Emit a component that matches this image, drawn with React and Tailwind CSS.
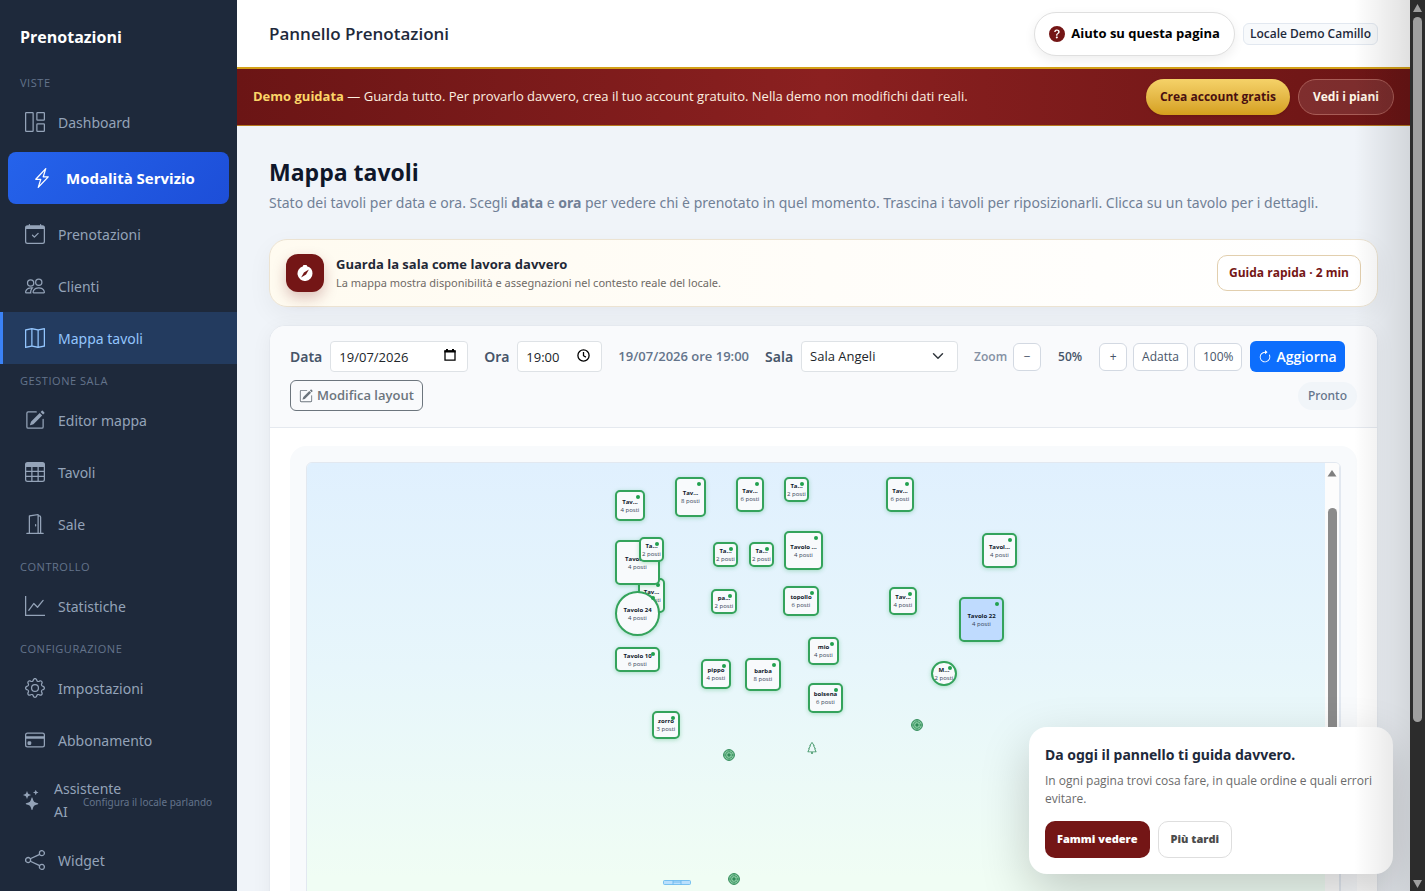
import { useState } from "react";
import clsx from "clsx";
import {
  BsArrowClockwise,
  BsCalendarCheck,
  BsCompassFill,
  BsCreditCard,
  BsDoorOpen,
  BsGear,
  BsGraphUp,
  BsGrid1X2,
  BsLightningCharge,
  BsMap,
  BsPencilSquare,
  BsPeople,
  BsQuestionCircleFill,
  BsShare,
  BsStars,
  BsTable,
  BsTree,
} from "react-icons/bs";

const sections = [
  {
    title: "Viste",
    items: [
      { label: "Dashboard", icon: BsGrid1X2 },
      { label: "Modalità Servizio", icon: BsLightningCharge, variant: "service" },
      { label: "Prenotazioni", icon: BsCalendarCheck },
      { label: "Clienti", icon: BsPeople },
      { label: "Mappa tavoli", icon: BsMap, active: true },
    ],
  },
  {
    title: "Gestione sala",
    items: [
      { label: "Editor mappa", icon: BsPencilSquare },
      { label: "Tavoli", icon: BsTable },
      { label: "Sale", icon: BsDoorOpen },
    ],
  },
  { title: "Controllo", items: [{ label: "Statistiche", icon: BsGraphUp }] },
  {
    title: "Configurazione",
    items: [
      { label: "Impostazioni", icon: BsGear },
      { label: "Abbonamento", icon: BsCreditCard },
      { label: "Assistente AI", icon: BsStars, hint: "Configura il locale parlando" },
      { label: "Widget", icon: BsShare },
    ],
  },
];

// x / y / w / h are canvas coordinates at 50% zoom
const tables = [
  { name: "Tav...", seats: 4, x: 308, y: 27, w: 30, h: 31 },
  { name: "Tav...", seats: 8, x: 368, y: 14, w: 31, h: 40 },
  { name: "Tav...", seats: 6, x: 429, y: 14, w: 28, h: 35 },
  { name: "Ta...", seats: 2, x: 477, y: 14, w: 25, h: 25 },
  { name: "Tav...", seats: 6, x: 579, y: 14, w: 28, h: 35 },
  { name: "Tavolo 2", seats: 4, x: 308, y: 77, w: 45, h: 45, front: true },
  { name: "Ta...", seats: 2, x: 332, y: 74, w: 25, h: 25, front: true },
  { name: "Tav...", seats: 6, x: 331, y: 115, w: 27, h: 35 },
  { name: "Tavolo 24", seats: 4, x: 308, y: 128, w: 45, h: 45, round: true },
  { name: "Ta...", seats: 2, x: 406, y: 79, w: 25, h: 25 },
  { name: "Ta...", seats: 2, x: 442, y: 79, w: 25, h: 25 },
  { name: "Tavolo ...", seats: 4, x: 477, y: 68, w: 39, h: 39 },
  { name: "Tavol...", seats: 4, x: 675, y: 70, w: 35, h: 35 },
  { name: "pa...", seats: 2, x: 404, y: 126, w: 26, h: 25 },
  { name: "topollo", seats: 6, x: 476, y: 123, w: 36, h: 30 },
  { name: "Tav...", seats: 4, x: 582, y: 124, w: 28, h: 28 },
  { name: "Tavolo 22", seats: 4, x: 652, y: 134, w: 45, h: 45, selected: true },
  { name: "Tavolo 10", seats: 6, x: 308, y: 184, w: 45, h: 25 },
  { name: "pippo", seats: 4, x: 394, y: 196, w: 30, h: 30 },
  { name: "barba", seats: 8, x: 438, y: 195, w: 36, h: 33 },
  { name: "mio", seats: 4, x: 501, y: 174, w: 31, h: 28 },
  { name: "bolsena", seats: 6, x: 501, y: 220, w: 35, h: 30 },
  { name: "M...", seats: 2, x: 624, y: 198, w: 26, h: 25, round: true },
  { name: "zorro", seats: 3, x: 345, y: 248, w: 28, h: 28 },
];

const plants = [
  { x: 604, y: 256 },
  { x: 416, y: 286 },
  { x: 421, y: 410 },
];

function NavItem({ item }) {
  const Icon = item.icon;

  if (item.variant === "service") {
    return (
      <a href="#" className="mx-2 my-1 flex h-13 items-center gap-[14px] rounded-lg bg-linear-135 from-[#2563eb] to-[#1d4ed8] pl-6 font-['Open_Sans'] text-[15px] font-bold text-white">
        <Icon className="size-5" />
        {item.label}
      </a>
    );
  }

  if (item.hint) {
    return (
      <a href="#" className="flex items-center gap-3 py-[11px] pl-[22px] text-[14px] leading-[23px] text-[#94a3b8]">
        <Icon className="size-5 shrink-0" />
        <span className="flex items-center">
          <span className="w-[29px] whitespace-nowrap">Assistente<br />AI</span>
          <span className="whitespace-nowrap pt-1 text-[10px] text-[#64748b]">{item.hint}</span>
        </span>
      </a>
    );
  }

  return (
    <a
      href="#"
      className={clsx(
        "flex h-13 items-center gap-[13px] border-l-[3px] pl-[22px] text-[14px]",
        item.active ? "border-[#3b82f6] bg-[#233b5f] text-[#93c5fd]" : "border-transparent text-[#94a3b8]"
      )}
    >
      <Icon className="size-5" />
      {item.label}
    </a>
  );
}

function Sidebar() {
  return (
    <aside className="h-full w-[237px] shrink-0 overflow-hidden bg-[#1e293b] font-['Noto_Sans','Open_Sans',sans-serif]">
      <div className="flex h-[66px] items-center px-5 pt-2 font-['Open_Sans'] text-[16px] font-bold text-white">Prenotazioni</div>
      <nav>
        {sections.map((s) => (
          <div key={s.title}>
            <div className="flex h-[30px] items-center px-5 pt-1 font-['Open_Sans'] text-[11px] uppercase tracking-wider text-[#64748b]">{s.title}</div>
            {s.items.map((item) => <NavItem key={item.label} item={item} />)}
          </div>
        ))}
      </nav>
    </aside>
  );
}

function DemoBanner() {
  return (
    <div className="flex items-center justify-between border-t-2 border-b border-t-[#d4a017] border-b-[#b7791f] bg-linear-90 from-[#6b1515] via-[#8b2020] to-[#6b1515] px-4 py-[10px]">
      <p className="text-[13px] text-[#fdf0e0]">
        <strong className="font-bold text-[#fcd568]">Demo guidata</strong> — Guarda tutto. Per provarlo davvero, crea il tuo account gratuito. Nella demo non modifichi dati reali.
      </p>
      <div className="flex gap-2">
        <button type="button" className="h-9 rounded-full bg-linear-to-b from-[#f5d268] to-[#d5a01b] px-[14px] text-[12px] font-bold text-[#4a1010] shadow">Crea account gratis</button>
        <button type="button" className="h-9 rounded-full border border-[#a85c56] bg-white/10 px-[14px] text-[12px] font-bold text-[#fff5e6]">Vedi i piani</button>
      </div>
    </div>
  );
}

function GuideCard() {
  return (
    <div className="mt-6 flex items-center rounded-[18px] border border-[#ece3d2] bg-linear-90 from-[#fffbf0] via-[#fffdf9] to-white px-4 py-[14px] shadow-[0_8px_24px_rgba(15,23,42,0.05)]">
      <div className="flex size-[38px] items-center justify-center rounded-xl bg-[#741616] text-white shadow-[0_6px_14px_rgba(116,22,22,0.25)]">
        <BsCompassFill className="size-4" />
      </div>
      <div className="ml-3 flex-1">
        <h2 className="text-[13px] leading-5 font-bold text-[#1f2937]">Guarda la sala come lavora davvero</h2>
        <p className="font-['Noto_Sans'] text-[11px] leading-[18px] text-[#6f6a66]">La mappa mostra disponibilità e assegnazioni nel contesto reale del locale.</p>
      </div>
      <button type="button" className="h-9 rounded-[10px] border border-[#e2cfae] bg-white px-[11px] text-[12px] font-bold text-[#741616]">Guida rapida · 2 min</button>
    </div>
  );
}

function Toolbar({ zoom, setZoom }) {
  const label = "mr-2 font-['Noto_Sans'] text-[14px] font-semibold";
  const field = "h-[31px] rounded border border-[#dee2e6] bg-white px-2 text-[13px] text-[#212529]";
  const small = "h-7 rounded-md border border-[#d3d9e2] bg-white text-[12px] font-medium text-[#475569]";

  return (
    <div className="flex flex-wrap items-center gap-y-2 border-b border-[#e5e9ef] bg-[#f9fafc] px-5 pt-[15px] pb-4 text-[#475569]">
      <label htmlFor="data" className={label}>Data</label>
      <div className="relative mr-4">
        <input id="data" defaultValue="19/07/2026" className={clsx(field, "w-[138px]")} />
        <svg className="absolute top-2 right-3 size-3 text-black" viewBox="0 0 12 12" fill="none" stroke="currentColor">
          <path d="M1 2h10v9.2H1z" strokeWidth="1.3" />
          <path d="M.4 2.6h11.2M3 0v2M9 0v2" strokeWidth="2" />
        </svg>
      </div>
      <label htmlFor="ora" className={label}>Ora</label>
      <div className="relative mr-4">
        <input id="ora" defaultValue="19:00" className={clsx(field, "w-[85px]")} />
        <svg className="absolute top-2 right-3 size-[13px] text-black" viewBox="0 0 13 13" fill="none" stroke="currentColor" strokeWidth="1.3">
          <circle cx="6.5" cy="6.5" r="5.6" />
          <path d="M6.5 3v3.7l2.4 1.4" />
        </svg>
      </div>
      <span className="mr-4 text-[13px] font-semibold text-[#64748b]">19/07/2026 ore 19:00</span>
      <label htmlFor="sala" className={label}>Sala</label>
      <div className="relative mr-4">
        <select id="sala" className={clsx(field, "w-[157px] appearance-none")}>
          <option>Sala Angeli</option>
        </select>
        <svg className="pointer-events-none absolute top-[9px] right-[14px] size-3 text-[#343a40]" viewBox="0 0 16 16" fill="none" stroke="currentColor" strokeWidth="2" strokeLinecap="round" strokeLinejoin="round">
          <path d="m2 5 6 6 6-6" />
        </svg>
      </div>
      <div className="flex items-center gap-[6px]">
        <span className="text-[12px] font-semibold text-[#8490a3]">Zoom</span>
        <button type="button" aria-label="Riduci" className={clsx(small, "w-7")} onClick={() => setZoom(zoom - 10)}>−</button>
        <span className="w-[46px] text-center text-[12px] font-semibold">{zoom}%</span>
        <button type="button" aria-label="Ingrandisci" className={clsx(small, "w-7")} onClick={() => setZoom(zoom + 10)}>+</button>
        <button type="button" className={clsx(small, "px-2")}>Adatta</button>
        <button type="button" className={clsx(small, "px-2")} onClick={() => setZoom(100)}>100%</button>
      </div>
      <button type="button" className="ml-2 flex h-[31px] items-center gap-1 rounded-md bg-[#0d6efd] px-2 text-[14px] font-semibold text-white">
        <BsArrowClockwise className="size-[14px]" />
        Aggiorna
      </button>
      <div className="flex w-full items-center justify-between">
        <button type="button" className="flex h-[31px] items-center gap-1 rounded-md border border-[#6c757d] px-2 text-[13px] font-semibold text-[#6c757d]">
          <BsPencilSquare className="size-[14px]" />
          Modifica layout
        </button>
        <span className="flex h-7 items-center rounded-full bg-[#f1f5f9] px-[10px] font-['Noto_Sans'] text-[12px] font-medium text-[#64748b]">Pronto</span>
      </div>
    </div>
  );
}

function TableNode({ table }) {
  return (
    <button
      type="button"
      className={clsx(
        "absolute flex flex-col items-center justify-center border-2 border-[#34a35c] text-[6px] leading-[8px] whitespace-nowrap shadow-[0_1px_4px_rgba(22,163,74,0.3)]",
        table.round ? "rounded-full" : "rounded-[5px]",
        table.selected ? "bg-[#bfdbfe]" : "bg-[#f8fafc]",
        table.front && "z-10"
      )}
      style={{ left: table.x, top: table.y, width: table.w, height: table.h }}
    >
      <span className="absolute top-[3px] right-[3px] size-1 rounded-full bg-[#22a04f]" />
      <span className="font-bold text-[#0f172a]">{table.name}</span>
      <span className="font-['Open_Sans'] text-[#334155]">{table.seats} posti</span>
    </button>
  );
}

function Plant({ x, y }) {
  return (
    <svg className="absolute size-3" style={{ left: x, top: y }} viewBox="0 0 12 12" fill="none" stroke="#2f8a57">
      <circle cx="6" cy="6" r="5.4" fill="#86c9a0" />
      <circle cx="6" cy="6" r="3.3" strokeDasharray="1.4 .7" />
      <circle cx="6" cy="6" r="1.2" fill="#2f8a57" />
      <path d="M6 .6v2M6 9.4v2M.6 6h2M9.4 6h2M2.2 2.2l1.4 1.4M8.4 8.4l1.4 1.4M9.8 2.2 8.4 3.6M3.6 8.4 2.2 9.8" strokeWidth=".6" />
    </svg>
  );
}

function FloorMap() {
  return (
    <div className="flex h-[640px] overflow-hidden rounded-md border border-[#e2e8f0]">
      <div className="relative flex-1 bg-linear-to-b from-[#e0f0fe] from-0% via-[#e7f6fb] via-32% to-[#f0fdf4] to-65%">
        {tables.map((t) => <TableNode key={`${t.x}-${t.y}`} table={t} />)}
        {plants.map((p) => <Plant key={p.x} x={p.x} y={p.y} />)}
        <BsTree className="absolute top-[279px] left-[499px] size-3 text-[#3f9465]" />
        <svg className="absolute top-[417px] left-[356px] h-[5px] w-7" viewBox="0 0 28 5" fill="#bae0fd" stroke="#60b5ee" strokeWidth=".8">
          <rect x=".5" y=".5" width="27" height="4" rx="1" />
          <path d="M10 .5v4M18 .5v4M10 2h8" />
        </svg>
      </div>
      <div className="flex w-[15px] flex-col items-center border-r border-[#e2e8f0] bg-[#fcfcfc]">
        <svg className="mt-[6px] h-2 w-[10px]" viewBox="0 0 10 8"><path d="M5 1 9.500 7.500H.5z" fill="#7f7f7f" /></svg>
        <div className="mt-[31px] h-[310px] w-[9px] rounded-full bg-[#8b8b8b]" />
      </div>
    </div>
  );
}

function GuideToast({ onClose }) {
  return (
    <div className="absolute right-[17px] bottom-[17px] z-20 w-[364px] rounded-[18px] bg-white px-4 pt-[17px] pb-4 shadow-[0_18px_50px_rgba(0,0,0,0.2)]">
      <h2 className="font-['Noto_Sans'] text-[14px] leading-[22px] font-bold text-[#1e293b]">Da oggi il pannello ti guida davvero.</h2>
      <p className="mt-[6px] text-[12px] leading-[18px] text-[#6b6b6b]">In ogni pagina trovi cosa fare, in quale ordine e quali errori evitare.</p>
      <div className="mt-[13px] flex gap-2">
        <button type="button" className="h-[37px] rounded-[10px] bg-[#741616] px-3 text-[11px] font-extrabold text-white">Fammi vedere</button>
        <button type="button" className="h-[37px] rounded-[10px] border border-[#dedede] bg-white px-3 text-[11px] font-extrabold text-[#4b4b4b]" onClick={onClose}>Più tardi</button>
      </div>
    </div>
  );
}

function PageScrollbar() {
  return (
    <div className="flex w-[15px] shrink-0 flex-col items-center bg-[#2c2c2c]">
      <svg className="mt-1 h-2 w-[9px]" viewBox="0 0 9 8"><path d="M4.500 0 9 8H0z" fill="#9f9f9f" /></svg>
      <div className="mt-[5px] h-[705px] w-[9px] rounded-full bg-[#9f9f9f]" />
      <svg className="mt-auto mb-[3px] h-2 w-[9px]" viewBox="0 0 9 8"><path d="M0 0h9L4.500 8z" fill="#9f9f9f" /></svg>
    </div>
  );
}

export default function App() {
  const [zoom, setZoom] = useState(50);
  const [showToast, setShowToast] = useState(true);

  return (
    <div className="flex h-screen overflow-hidden font-['Open_Sans','Noto_Sans',sans-serif]">
      <Sidebar />
      <div className="relative h-full min-w-0 flex-1 overflow-hidden bg-[#f0f4f9]">
        <header className="flex h-[67px] items-center justify-between bg-white px-8">
          <div className="text-[17px] font-semibold text-[#1e293b]">Pannello Prenotazioni</div>
          <div className="flex items-center gap-2">
            <button type="button" className="flex h-11 items-center gap-[6px] rounded-full border border-[#dfdfdf] bg-white px-[14px] text-[13px] font-bold text-black shadow-[0_4px_12px_rgba(0,0,0,0.07)]">
              <BsQuestionCircleFill className="size-4 text-[#741616]" />
              Aiuto su questa pagina
            </button>
            <span className="rounded-md border border-[#e2e8f0] bg-[#f8fafc] px-[6px] text-[12px] leading-5 font-semibold text-[#1e293b]">Locale Demo Camillo</span>
          </div>
        </header>
        <DemoBanner />
        <main className="px-8 pt-8">
          <h1 className="text-[23px] leading-[29px] font-bold text-[#0f172a]">Mappa tavoli</h1>
          <p className="mt-1 font-['Noto_Sans'] text-[14px] leading-6 text-[#718096]">
            Stato dei tavoli per data e ora. Scegli <strong className="font-bold">data</strong> e <strong className="font-bold">ora</strong> per vedere chi è prenotato in quel momento. Trascina i tavoli per riposizionarli. Clicca su un tavolo per i dettagli.
          </p>
          <GuideCard />
          <section className="mt-[18px] overflow-hidden rounded-2xl border border-[#e5e9ef] bg-white shadow-[0_4px_20px_rgba(15,23,42,0.05)]">
            <Toolbar zoom={zoom} setZoom={setZoom} />
            <div className="px-5 py-[18px]">
              <div className="rounded-2xl bg-[#f8fafc] p-4">
                <FloorMap />
              </div>
            </div>
          </section>
        </main>
        {showToast && <GuideToast onClose={() => setShowToast(false)} />}
        <div className="pointer-events-none absolute inset-y-0 right-0 z-30 w-14 bg-linear-to-l from-black/12 to-transparent" />
      </div>
      <PageScrollbar />
    </div>
  );
}
